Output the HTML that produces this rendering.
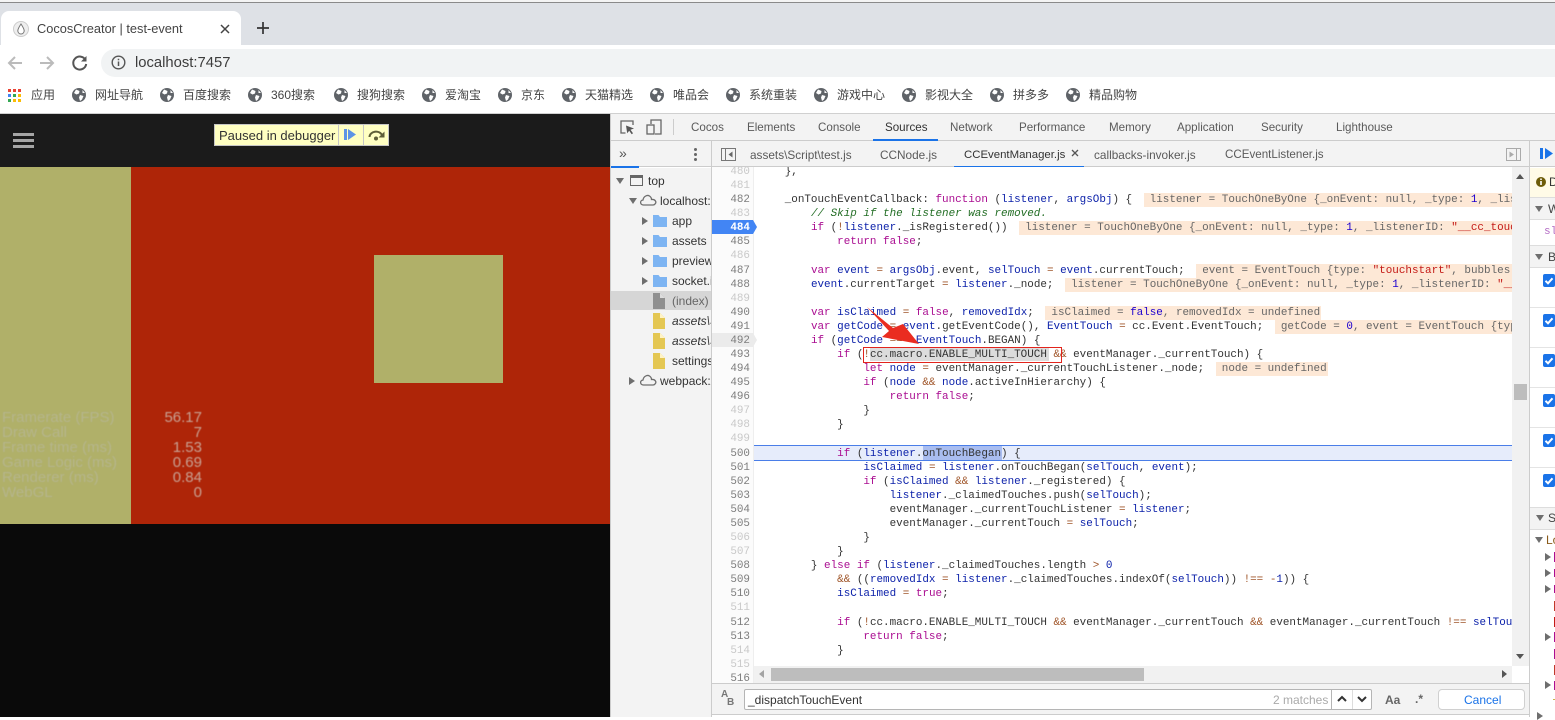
<!DOCTYPE html>
<html><head><meta charset="utf-8">
<style>
html,body{margin:0;padding:0;width:1555px;height:717px;overflow:hidden;background:#fff;font-family:"Liberation Sans","Noto Sans CJK SC",sans-serif;color:#333}
.a{position:absolute}
.t{position:absolute;white-space:nowrap;font-size:12px;line-height:14px}
.bm{position:absolute;top:88px;font-size:12px;line-height:15px;color:#444;white-space:nowrap}
.g{position:absolute;top:88px;width:14px;height:14px}
.dt{position:absolute;top:121px;font-size:11.6px;line-height:14px;color:#5a5a5a;white-space:nowrap}
.ft{position:absolute;top:148px;font-size:11.8px;line-height:14px;color:#5a5a5a;white-space:nowrap}
.nv{position:absolute;left:0;font-size:12px;line-height:14px;color:#333;white-space:nowrap}
.tri{position:absolute;width:0;height:0;border-top:4px solid transparent;border-bottom:4px solid transparent;border-left:6px solid #6e6e6e}
.trd{position:absolute;width:0;height:0;border-left:4.5px solid transparent;border-right:4.5px solid transparent;border-top:6px solid #6e6e6e}
pre{margin:0;font-family:"Liberation Mono",monospace;font-size:10.93px;line-height:14.08px;color:#333}
#code b{font-weight:normal;color:#aa0d91}
#code i{font-style:normal;color:#0d22aa}
#code u{text-decoration:none;color:#a0562a}
#code em{font-style:italic;color:#236e25}
#code s{text-decoration:none;background:#fde8d6;color:#666;padding:0 500px 0 6px;margin-left:5px;display:inline-block;height:14px;line-height:14px}
#code s.e{padding-right:1px}
#code s i{color:#1c00cf}
#code s b{color:#c41a16}
#gut div{height:14.08px;text-align:right;color:#7d7d7d}
#gut div.l{color:#c9c9c9}
.stat{position:absolute;left:2px;font:15px/15px "Liberation Sans",sans-serif;white-space:nowrap;filter:blur(.4px)}
.cb{position:absolute;left:1543px;width:12px;height:13px;background:#1a73e8;border-radius:2px}
.sep{position:absolute;left:1530px;width:25px;height:1px;background:#e4e4e4}
</style></head><body>
<svg width="0" height="0" style="position:absolute"><defs>
<symbol id="globe" viewBox="0 0 14 14"><circle cx="7" cy="7" r="7" fill="#5f6368"/><path d="M4 1.500 L7.500 3 L7 5.500 L4.500 6.500 L2 5 Z M8 7 L11.500 8 L10 11.500 L8 13 L7 9.500 Z M10.500 2 L13 5 L10.500 5 Z" fill="#fff"/></symbol>
<symbol id="folder" viewBox="0 0 14 14"><path d="M0 1h5.500l1.500 2h7v10H0z" fill="#7db4f2"/></symbol>
<symbol id="file" viewBox="0 0 12 16"><path d="M0 0h7l5 5v11H0z" fill="#e4c753"/><path d="M7 0l5 5H7z" fill="#fff3c4"/></symbol>
<symbol id="cloud" viewBox="0 0 18 12"><path d="M4.500 11 C1 11 .5 6.500 4 6 C4.500 2.500 8 .5 10.500 2 C12 3 12.500 4.500 12.500 5.500 C16 5 18 8 16 10 C15.500 10.700 15 11 14 11 Z" fill="none" stroke="#6e6e6e" stroke-width="1.300"/></symbol>
<symbol id="chk" viewBox="0 0 12 13"><path d="M2.500 6.800l2.500 2.500 4.500-5" fill="none" stroke="#fff" stroke-width="2"/></symbol>
</defs></svg>

<!-- browser chrome -->
<div class="a" style="left:0;top:0;width:1555px;height:45px;background:#dee1e6"></div>
<div class="a" style="left:0;top:0;width:1555px;height:3px;background:#f4f4f4;border-bottom:1px solid #8a8a8a;box-sizing:border-box"></div>
<div class="a" style="left:1px;top:11px;width:240px;height:34px;background:#fff;border-radius:8px 8px 0 0"></div>
<svg class="a" style="left:13px;top:21px" width="16" height="16" viewBox="0 0 16 16"><circle cx="8" cy="8" r="7.500" fill="#eee" stroke="#ccc"/><path d="M8 3 C6 6 4.800 8 4.800 9.800 A3.200 3.200 0 0 0 11.200 9.800 C11.200 8 10 6 8 3 Z" fill="#fff" stroke="#777" stroke-width="1"/></svg>
<div class="t" style="left:37px;top:22px;font-size:12.800px;color:#444">CocosCreator | test-event</div>
<svg class="a" style="left:220px;top:24px" width="10" height="10"><path d="M1 1l8 8M9 1l-8 8" stroke="#444" stroke-width="1.500"/></svg>
<svg class="a" style="left:256px;top:21px" width="14" height="14"><path d="M7 1v12M1 7h12" stroke="#333" stroke-width="1.700"/></svg>
<svg class="a" style="left:6px;top:54px" width="18" height="18"><path d="M16 9H3M9 3L3 9l6 6" fill="none" stroke="#bbb" stroke-width="2"/></svg>
<svg class="a" style="left:38px;top:54px" width="18" height="18"><path d="M2 9h13M9 3l6 6-6 6" fill="none" stroke="#bbb" stroke-width="2"/></svg>
<svg class="a" style="left:71px;top:54px" width="18" height="18"><path d="M14.500 6 A6.500 6.500 0 1 0 15.200 10" fill="none" stroke="#555" stroke-width="2"/><path d="M15.500 2v5.500H10z" fill="#555"/></svg>
<div class="a" style="left:101px;top:49px;width:1454px;height:28px;background:#f1f3f4;border-radius:14px 0 0 14px"></div>
<svg class="a" style="left:111px;top:55px" width="15" height="15"><circle cx="7.500" cy="7.500" r="6.300" fill="none" stroke="#555" stroke-width="1.400"/><path d="M7.500 6.500v4.500M7.500 3.800v1.500" stroke="#555" stroke-width="1.500"/></svg>
<div class="t" style="left:135px;top:55px;font-size:14.800px;line-height:16px;color:#3c3c3c">localhost:7457</div>
<svg class="a" style="left:8px;top:89px" width="13" height="13"><g fill="#ea4335"><rect width="3" height="3"/><rect x="5" width="3" height="3"/><rect x="10" width="3" height="3"/></g><g fill="#4285f4"><rect y="5" width="3" height="3"/></g><rect x="5" y="5" width="3" height="3" fill="#34a853"/><rect x="10" y="5" width="3" height="3" fill="#fbbc05"/><rect y="10" width="3" height="3" fill="#34a853"/><rect x="5" y="10" width="3" height="3" fill="#fbbc05"/><rect x="10" y="10" width="3" height="3" fill="#fbbc05"/></svg>
<div class="bm" style="left:31px">应用</div>
<svg class="g" style="left:72px"><use href="#globe"/></svg><div class="bm" style="left:95px">网址导航</div>
<svg class="g" style="left:160px"><use href="#globe"/></svg><div class="bm" style="left:183px">百度搜索</div>
<svg class="g" style="left:248px"><use href="#globe"/></svg><div class="bm" style="left:271px">360搜索</div>
<svg class="g" style="left:334px"><use href="#globe"/></svg><div class="bm" style="left:357px">搜狗搜索</div>
<svg class="g" style="left:422px"><use href="#globe"/></svg><div class="bm" style="left:445px">爱淘宝</div>
<svg class="g" style="left:498px"><use href="#globe"/></svg><div class="bm" style="left:521px">京东</div>
<svg class="g" style="left:562px"><use href="#globe"/></svg><div class="bm" style="left:585px">天猫精选</div>
<svg class="g" style="left:650px"><use href="#globe"/></svg><div class="bm" style="left:673px">唯品会</div>
<svg class="g" style="left:726px"><use href="#globe"/></svg><div class="bm" style="left:749px">系统重装</div>
<svg class="g" style="left:814px"><use href="#globe"/></svg><div class="bm" style="left:837px">游戏中心</div>
<svg class="g" style="left:902px"><use href="#globe"/></svg><div class="bm" style="left:925px">影视大全</div>
<svg class="g" style="left:990px"><use href="#globe"/></svg><div class="bm" style="left:1013px">拼多多</div>
<svg class="g" style="left:1066px"><use href="#globe"/></svg><div class="bm" style="left:1089px">精品购物</div>
<div class="a" style="left:0;top:113px;width:1555px;height:1px;background:#d0d0d0"></div>

<!-- page -->
<div class="a" style="left:0;top:114px;width:610px;height:603px;background:#0a0a0a"></div>
<div class="a" style="left:0;top:114px;width:610px;height:53px;background:#1b1b1b"></div>
<div class="a" style="left:13px;top:133px;width:21px;height:3px;background:#a5a5a5"></div>
<div class="a" style="left:13px;top:139px;width:21px;height:3px;background:#a5a5a5"></div>
<div class="a" style="left:13px;top:145px;width:21px;height:3px;background:#a5a5a5"></div>
<div class="a" style="left:0;top:167px;width:610px;height:357px;background:#ae2508"></div>
<div class="a" style="left:0;top:167px;width:131px;height:357px;background:#b0b069"></div>
<div class="a" style="left:374px;top:255px;width:129px;height:128px;background:#b0b069"></div>
<div class="stat" style="top:410px;color:#b5b58c">Framerate (FPS)</div>
<div class="stat" style="top:425px;color:#b5b58c">Draw Call</div>
<div class="stat" style="top:440px;color:#b5b58c">Frame time (ms)</div>
<div class="stat" style="top:455px;color:#b5b58c">Game Logic (ms)</div>
<div class="stat" style="top:470px;color:#b5b58c">Renderer (ms)</div>
<div class="stat" style="top:485px;color:#b5b58c">WebGL</div>
<div class="stat" style="left:120px;width:82px;text-align:right;top:410px;color:#c9a294">56.17</div>
<div class="stat" style="left:120px;width:82px;text-align:right;top:425px;color:#c9a294">7</div>
<div class="stat" style="left:120px;width:82px;text-align:right;top:440px;color:#c9a294">1.53</div>
<div class="stat" style="left:120px;width:82px;text-align:right;top:455px;color:#c9a294">0.69</div>
<div class="stat" style="left:120px;width:82px;text-align:right;top:470px;color:#c9a294">0.84</div>
<div class="stat" style="left:120px;width:82px;text-align:right;top:485px;color:#c9a294">0</div>
<div class="a" style="left:214px;top:124px;width:175px;height:22px;background:#ffffc2;border:1px solid #c6c6c6;box-sizing:border-box"></div>
<div class="t" style="left:219px;top:129px;font-size:13px;color:#333">Paused in debugger</div>
<div class="a" style="left:338px;top:124px;width:1px;height:22px;background:#c6c6c6"></div>
<div class="a" style="left:363px;top:124px;width:1px;height:22px;background:#c6c6c6"></div>
<svg class="a" style="left:343px;top:129px" width="15" height="12"><rect width="3" height="11" x="1" fill="#5c94e6"/><path d="M5 0l8 5.500-8 5.500z" fill="#5c94e6"/></svg>
<svg class="a" style="left:367px;top:130px" width="19" height="11"><path d="M2.500 7 A6.500 5.500 0 0 1 15 5" fill="none" stroke="#5e5e38" stroke-width="2"/><path d="M17.500 1.500v6h-6z" fill="#5e5e38"/><circle cx="9" cy="8.500" r="2" fill="#5e5e38"/></svg>

<!-- devtools -->
<div class="a" style="left:610px;top:114px;width:945px;height:603px;background:#fff;border-left:1px solid #ccc;box-sizing:border-box"></div>
<div class="a" style="left:611px;top:114px;width:944px;height:26px;background:#f3f3f3;border-bottom:1px solid #ccc"></div>
<svg class="a" style="left:620px;top:120px" width="16" height="16"><path d="M5.500 13H1V1h12v4" fill="none" stroke="#666" stroke-width="1.300"/><path d="M6 5.500l8 3-3.500 1.300 2.500 3.500-1.300 1-2.500-3.500-2 2.500z" fill="#555"/></svg>
<svg class="a" style="left:646px;top:119px" width="17" height="16"><path d="M5 5V1h10v14H9" fill="none" stroke="#666" stroke-width="1.300"/><rect x="1" y="6" width="7" height="9" fill="none" stroke="#666" stroke-width="1.300"/></svg>
<div class="a" style="left:673px;top:119px;width:1px;height:16px;background:#ccc"></div>
<div class="dt" style="left:691px">Cocos</div>
<div class="dt" style="left:747px">Elements</div>
<div class="dt" style="left:818px">Console</div>
<div class="dt" style="left:885px;color:#333">Sources</div>
<div class="dt" style="left:950px">Network</div>
<div class="dt" style="left:1019px">Performance</div>
<div class="dt" style="left:1109px">Memory</div>
<div class="dt" style="left:1177px">Application</div>
<div class="dt" style="left:1261px">Security</div>
<div class="dt" style="left:1336px">Lighthouse</div>
<div class="a" style="left:873px;top:139px;width:65px;height:2px;background:#1a73e8"></div>

<!-- second row -->
<div class="a" style="left:611px;top:141px;width:944px;height:26px;background:#f3f3f3;border-bottom:1px solid #ccc;box-sizing:border-box"></div>
<div class="t" style="left:619px;top:146px;font-size:14px;color:#555">»</div>
<div class="a" style="left:694px;top:148px;width:3px;height:3px;background:#666;box-shadow:0 5px 0 #666,0 10px 0 #666;border-radius:2px"></div>
<div class="a" style="left:611px;top:166px;width:28px;height:2px;background:#1a73e8"></div>
<svg class="a" style="left:721px;top:148px" width="16" height="14"><rect x=".5" y=".5" width="14" height="12" fill="none" stroke="#777"/><path d="M4.500 1v12" stroke="#777"/><path d="M11.500 3.500v6l-4-3z" fill="#666"/></svg>
<div class="ft" style="left:750px">assets\Script\test.js</div>
<div class="ft" style="left:880px">CCNode.js</div>
<div class="ft" style="left:964px;color:#333;font-size:11.4px">CCEventManager.js</div>
<svg class="a" style="left:1071px;top:149px" width="8" height="8"><path d="M1 1l6 6M7 1l-6 6" stroke="#555" stroke-width="1.300"/></svg>
<div class="a" style="left:954px;top:166px;width:130px;height:2px;background:#1a73e8"></div>
<div class="ft" style="left:1094px">callbacks-invoker.js</div>
<div class="ft" style="left:1225px;font-size:11.6px">CCEventListener.js</div>
<svg class="a" style="left:1506px;top:148px" width="16" height="14"><rect x=".5" y=".5" width="14" height="12" fill="none" stroke="#aaa"/><path d="M10.500 1v12" stroke="#aaa"/><path d="M3.500 3.500v6l4.500-3z" fill="#aaa"/></svg>

<!-- nav -->
<div class="a" style="left:611px;top:168px;width:100px;height:549px;background:#f3f3f3;overflow:hidden">
  <div class="a" style="left:0;top:123px;width:100px;height:19px;background:#d6d6d6"></div>
  <div class="trd" style="left:5px;top:10px"></div>
  <div class="a" style="left:19px;top:7px;width:13px;height:11px;border:1.500px solid #666;border-top-width:3px;box-sizing:border-box"></div>
  <div class="nv" style="left:37px;top:6px">top</div>
  <div class="trd" style="left:18px;top:30px"></div>
  <svg class="a" style="left:28px;top:26px" width="18" height="12"><use href="#cloud"/></svg>
  <div class="nv" style="left:49px;top:26px">localhost:</div>
  <div class="tri" style="left:31px;top:49px"></div><svg class="a" style="left:42px;top:46px" width="14" height="14"><use href="#folder"/></svg><div class="nv" style="left:61px;top:46px">app</div>
  <div class="tri" style="left:31px;top:69px"></div><svg class="a" style="left:42px;top:66px" width="14" height="14"><use href="#folder"/></svg><div class="nv" style="left:61px;top:66px">assets</div>
  <div class="tri" style="left:31px;top:89px"></div><svg class="a" style="left:42px;top:86px" width="14" height="14"><use href="#folder"/></svg><div class="nv" style="left:61px;top:86px">preview</div>
  <div class="tri" style="left:31px;top:109px"></div><svg class="a" style="left:42px;top:106px" width="14" height="14"><use href="#folder"/></svg><div class="nv" style="left:61px;top:106px">socket.io</div>
  <svg class="a" style="left:42px;top:125px" width="12" height="16"><path d="M0 0h7l5 5v11H0z" fill="#8f8f8f"/><path d="M7 0l5 5H7z" fill="#ddd"/></svg><div class="nv" style="left:61px;top:126px;color:#666">(index)</div>
  <svg class="a" style="left:42px;top:145px" width="12" height="16"><use href="#file"/></svg><div class="nv" style="left:61px;top:146px;font-style:italic">assets\Script</div>
  <svg class="a" style="left:42px;top:165px" width="12" height="16"><use href="#file"/></svg><div class="nv" style="left:61px;top:166px;font-style:italic">assets\Script</div>
  <svg class="a" style="left:42px;top:185px" width="12" height="16"><use href="#file"/></svg><div class="nv" style="left:61px;top:186px">settings.js</div>
  <div class="tri" style="left:18px;top:209px"></div>
  <svg class="a" style="left:28px;top:206px" width="18" height="12"><use href="#cloud"/></svg>
  <div class="nv" style="left:49px;top:206px">webpack://</div>
</div>
<div class="a" style="left:711px;top:141px;width:1px;height:576px;background:#ccc"></div>

<!-- gutter -->
<div class="a" style="left:712px;top:167px;width:42px;height:516px;background:#fbfbfb;border-right:1px solid #eee;box-sizing:border-box"></div>
<div class="a" style="left:712px;top:220px;width:41px;height:14px;background:#4285f4"></div>
<div class="a" style="left:753px;top:220px;width:0;height:0;border-top:7px solid transparent;border-bottom:7px solid transparent;border-left:4px solid #4285f4;z-index:3"></div>
<div class="a" style="left:712px;top:333px;width:41px;height:14px;background:#ebebeb"></div>
<div class="a" style="left:753px;top:333px;width:0;height:0;border-top:7px solid transparent;border-bottom:7px solid transparent;border-left:4px solid #ebebeb;z-index:3"></div>
<div class="a" style="left:712px;top:167px;width:38px;height:516px;overflow:hidden">
<pre id="gut" style="position:absolute;left:0;top:-2px;width:38px"><div class="l">480</div><div class="l">481</div><div>482</div><div class="l">483</div><div style="color:#fff;font-weight:bold">484</div><div>485</div><div class="l">486</div><div>487</div><div>488</div><div class="l">489</div><div>490</div><div>491</div><div>492</div><div>493</div><div>494</div><div>495</div><div>496</div><div class="l">497</div><div class="l">498</div><div class="l">499</div><div>500</div><div>501</div><div>502</div><div>503</div><div>504</div><div>505</div><div class="l">506</div><div class="l">507</div><div>508</div><div>509</div><div>510</div><div class="l">511</div><div>512</div><div>513</div><div class="l">514</div><div class="l">515</div><div>516</div></pre>
</div>

<!-- code -->
<div class="a" style="left:754px;top:167px;width:758px;height:499px;overflow:hidden;background:#fff">
  <div class="a" style="left:0;top:278px;width:758px;height:14px;background:#e6ecfb;border-top:1px solid #4a7ee8;border-bottom:1px solid #4a7ee8"></div>
  <div class="a" style="left:169px;top:279px;width:79px;height:14px;background:#a9bdf0"></div>
  <div class="a" style="left:116px;top:180px;width:179px;height:14px;background:#dcdcdc"></div>
<pre id="code" style="position:absolute;left:4.500px;top:-2px;width:2000px">    },

    _onTouchEventCallback: <b>function</b> (<i>listener</i>, <i>argsObj</i>) { <s>listener = TouchOneByOne {_onEvent: null, _type: <i>1</i>, _listenerID: <b>"__cc_touch"</b></s>
        <em>// Skip if the listener was removed.</em>
        <b>if</b> (<u>!</u><i>listener</i>._isRegistered()) <s>listener = TouchOneByOne {_onEvent: null, _type: <i>1</i>, _listenerID: <b>"__cc_touch"</b></s>
            <b>return</b> <b>false</b>;

        <b>var</b> <i>event</i> <u>=</u> <i>argsObj</i>.event, <i>selTouch</i> <u>=</u> <i>event</i>.currentTouch; <s>event = EventTouch {type: <b>"touchstart"</b>, bubbles: true</s>
        <i>event</i>.currentTarget <u>=</u> <i>listener</i>._node; <s>listener = TouchOneByOne {_onEvent: null, _type: <i>1</i>, _listenerID: <b>"__cc_touch"</b></s>

        <b>var</b> <i>isClaimed</i> <u>=</u> <b>false</b>, <i>removedIdx</i>; <s class="e">isClaimed = <i>false</i>, removedIdx = undefined</s>
        <b>var</b> <i>getCode</i> <u>=</u> <i>event</i>.getEventCode(), <i>EventTouch</i> <u>=</u> cc.Event.EventTouch; <s>getCode = <i>0</i>, event = EventTouch {type: <b>"touchstart"</b></s>
        <b>if</b> (<i>getCode</i> <u>===</u> <i>EventTouch</i>.BEGAN) {
            <b>if</b> (<u>!</u>cc.macro.ENABLE_MULTI_TOUCH <u>&amp;&amp;</u> eventManager._currentTouch) {
                <b>let</b> <i>node</i> <u>=</u> eventManager._currentTouchListener._node; <s class="e">node = undefined</s>
                <b>if</b> (<i>node</i> <u>&amp;&amp;</u> <i>node</i>.activeInHierarchy) {
                    <b>return</b> <b>false</b>;
                }
            }

            <b>if</b> (<i>listener</i>.onTouchBegan) {
                <i>isClaimed</i> <u>=</u> <i>listener</i>.onTouchBegan(<i>selTouch</i>, <i>event</i>);
                <b>if</b> (<i>isClaimed</i> <u>&amp;&amp;</u> <i>listener</i>._registered) {
                    <i>listener</i>._claimedTouches.push(<i>selTouch</i>);
                    eventManager._currentTouchListener <u>=</u> <i>listener</i>;
                    eventManager._currentTouch <u>=</u> <i>selTouch</i>;
                }
            }
        } <b>else</b> <b>if</b> (<i>listener</i>._claimedTouches.length <u>&gt;</u> <i>0</i>
            <u>&amp;&amp;</u> ((<i>removedIdx</i> <u>=</u> <i>listener</i>._claimedTouches.indexOf(<i>selTouch</i>)) <u>!==</u> <u>-</u><i>1</i>)) {
            <i>isClaimed</i> <u>=</u> <b>true</b>;

            <b>if</b> (<u>!</u>cc.macro.ENABLE_MULTI_TOUCH <u>&amp;&amp;</u> eventManager._currentTouch <u>&amp;&amp;</u> eventManager._currentTouch <u>!==</u> <i>selTouch</i>) {
                <b>return</b> <b>false</b>;
            }

</pre>
</div>

<!-- annotations -->
<div class="a" style="left:863px;top:347px;width:197px;height:14px;border:1px solid #e2241c"></div>
<svg class="a" style="left:860px;top:300px" width="70" height="50"><path d="M7 7 L33 28 L43 24 L59 44 L22 37 L29 31 Z" fill="#ea2c20"/></svg>

<!-- v scrollbar -->
<div class="a" style="left:1512px;top:167px;width:17px;height:516px;background:#f1f1f1"></div>
<div class="a" style="left:1516px;top:174px;width:0;height:0;border-left:4.500px solid transparent;border-right:4.500px solid transparent;border-bottom:5px solid #555"></div>
<div class="a" style="left:1516px;top:654px;width:0;height:0;border-left:4.500px solid transparent;border-right:4.500px solid transparent;border-top:5px solid #555"></div>
<div class="a" style="left:1514px;top:384px;width:13px;height:16px;background:#bdbdbd"></div>
<!-- h scrollbar -->
<div class="a" style="left:754px;top:666px;width:758px;height:17px;background:#f1f1f1"></div>
<div class="a" style="left:759px;top:670px;width:0;height:0;border-top:4px solid transparent;border-bottom:4px solid transparent;border-right:5px solid #a3a3a3"></div>
<div class="a" style="left:771px;top:668px;width:373px;height:13px;background:#bdbdbd"></div>
<div class="a" style="left:1502px;top:670px;width:0;height:0;border-top:4px solid transparent;border-bottom:4px solid transparent;border-left:5px solid #555"></div>
<div class="a" style="left:1512px;top:666px;width:17px;height:17px;background:#fff"></div>

<!-- search -->
<div class="a" style="left:712px;top:683px;width:817px;height:32px;background:#f3f3f3;border-top:1px solid #ccc;border-bottom:1px solid #ccc;box-sizing:border-box"></div>
<div class="t" style="left:721px;top:690px;font-size:10px;line-height:9px;font-weight:bold;color:#777">A</div>
<div class="t" style="left:727px;top:698px;font-size:10px;line-height:10px;font-weight:bold;color:#777">B</div>
<div class="a" style="left:744px;top:689px;width:628px;height:21px;background:#fff;border:1px solid #b5b5b5;box-sizing:border-box;border-radius:2px"></div>
<div class="t" style="left:748px;top:693px;color:#333">_dispatchTouchEvent</div>
<div class="t" style="left:1273px;top:693px;color:#aaa">2 matches</div>
<div class="a" style="left:1331px;top:689px;width:1px;height:21px;background:#b5b5b5"></div>
<div class="a" style="left:1352px;top:690px;width:1px;height:19px;background:#ddd"></div>
<svg class="a" style="left:1336px;top:695px" width="12" height="8"><path d="M2 6l4-4 4 4" fill="none" stroke="#333" stroke-width="2"/></svg>
<svg class="a" style="left:1356px;top:695px" width="12" height="8"><path d="M2 2l4 4 4-4" fill="none" stroke="#333" stroke-width="2"/></svg>
<div class="t" style="left:1385px;top:693px;font-weight:bold;color:#666">Aa</div>
<div class="t" style="left:1415px;top:692px;font-weight:bold;color:#666">.*</div>
<div class="a" style="left:1438px;top:689px;width:87px;height:21px;background:#fff;border:1px solid #d0d0d0;box-sizing:border-box;border-radius:4px"></div>
<div class="t" style="left:1464px;top:693px;color:#1a73e8">Cancel</div>

<!-- right sidebar -->
<div class="a" style="left:1529px;top:141px;width:1px;height:576px;background:#ccc"></div>
<div class="a" style="left:1530px;top:141px;width:25px;height:26px;background:#f3f3f3;border-bottom:1px solid #ccc;box-sizing:border-box"></div>
<svg class="a" style="left:1539px;top:147px" width="16" height="14"><rect y="1" x="1" width="3" height="11" fill="#1a73e8"/><path d="M6 1l8 5.500-8 5.500z" fill="#1a73e8"/></svg>
<div class="a" style="left:1530px;top:168px;width:25px;height:29px;background:#fffbe7;border-bottom:1px solid #ddd"></div>
<svg class="a" style="left:1536px;top:177px" width="10" height="10"><circle cx="5" cy="5" r="5" fill="#6d5c08"/><path d="M5 4v4M5 1.500v1.500" stroke="#fff" stroke-width="1.600"/></svg>
<div class="t" style="left:1549px;top:175px;color:#333">D</div>
<div class="a" style="left:1530px;top:198px;width:25px;height:21px;background:#f3f3f3;border-bottom:1px solid #ddd"></div>
<div class="trd" style="left:1535px;top:206px"></div><div class="t" style="left:1548px;top:202px;color:#444">W</div>
<div class="t" style="left:1544px;top:225px;font-family:'Liberation Mono',monospace;font-size:11px;color:#b36bc4">sl</div>
<div class="a" style="left:1530px;top:245px;width:25px;height:21px;background:#f3f3f3;border-top:1px solid #ddd;border-bottom:1px solid #ddd"></div>
<div class="trd" style="left:1535px;top:254px"></div><div class="t" style="left:1548px;top:250px;color:#444">B</div>
<div class="cb" style="top:274px"></div><svg class="a" style="left:1543px;top:274px" width="12" height="13"><use href="#chk"/></svg>
<div class="cb" style="top:314px"></div><svg class="a" style="left:1543px;top:314px" width="12" height="13"><use href="#chk"/></svg>
<div class="cb" style="top:354px"></div><svg class="a" style="left:1543px;top:354px" width="12" height="13"><use href="#chk"/></svg>
<div class="cb" style="top:394px"></div><svg class="a" style="left:1543px;top:394px" width="12" height="13"><use href="#chk"/></svg>
<div class="cb" style="top:434px"></div><svg class="a" style="left:1543px;top:434px" width="12" height="13"><use href="#chk"/></svg>
<div class="cb" style="top:474px"></div><svg class="a" style="left:1543px;top:474px" width="12" height="13"><use href="#chk"/></svg>
<div class="sep" style="top:307px"></div><div class="sep" style="top:347px"></div><div class="sep" style="top:387px"></div><div class="sep" style="top:427px"></div><div class="sep" style="top:467px"></div>
<div class="a" style="left:1530px;top:507px;width:25px;height:21px;background:#f3f3f3;border-top:1px solid #ddd;border-bottom:1px solid #ddd"></div>
<div class="trd" style="left:1536px;top:515px"></div><div class="t" style="left:1548px;top:511px;color:#444">Se</div>
<div class="trd" style="left:1535px;top:537px"></div><div class="t" style="left:1546px;top:533px;color:#8a5a1a">Lo</div>
<div class="tri" style="left:1545px;top:553px"></div><div class="a" style="left:1554px;top:552px;width:1px;height:10px;background:#aa0d91"></div>
<div class="tri" style="left:1545px;top:569px"></div><div class="a" style="left:1554px;top:569px;width:1px;height:8px;background:#aa0d91"></div>
<div class="tri" style="left:1545px;top:585px"></div><div class="a" style="left:1554px;top:585px;width:1px;height:8px;background:#aa0d91"></div>
<div class="a" style="left:1554px;top:601px;width:1px;height:10px;background:#c0392b"></div>
<div class="a" style="left:1554px;top:617px;width:1px;height:10px;background:#c41a16"></div>
<div class="tri" style="left:1545px;top:633px"></div><div class="a" style="left:1554px;top:632px;width:1px;height:10px;background:#aa0d91"></div>
<div class="a" style="left:1554px;top:649px;width:1px;height:10px;background:#aa0d91"></div>
<div class="a" style="left:1554px;top:665px;width:1px;height:10px;background:#c0392b"></div>
<div class="tri" style="left:1545px;top:681px"></div><div class="a" style="left:1554px;top:681px;width:1px;height:9px;background:#aa0d91"></div>
<div class="a" style="left:1553px;top:699px;width:2px;height:1px;background:#c9b24a"></div>
<div class="tri" style="left:1537px;top:712px"></div>
</body></html>
